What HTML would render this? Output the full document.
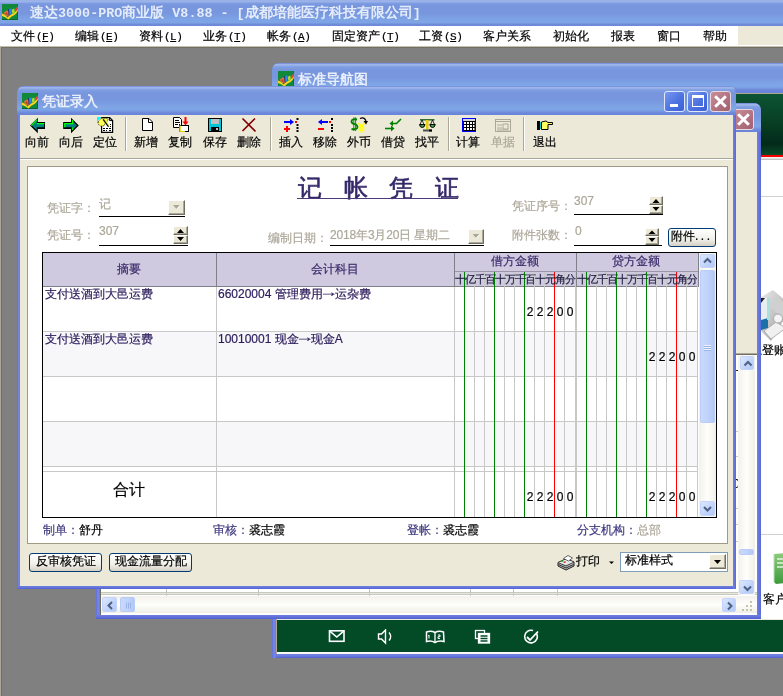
<!DOCTYPE html>
<html><head><meta charset="utf-8">
<style>
*{box-sizing:border-box}
html,body{margin:0;padding:0}
body{will-change:transform;-webkit-text-stroke-width:0.2px;width:783px;height:696px;overflow:hidden;position:relative;background:#808080;font-family:"Liberation Sans",sans-serif;font-size:12px;color:#000}
.a{position:absolute}
.tbar{background:linear-gradient(to bottom,#5a72d8 0px,#9fb6ea 1px,#9db4ea 2px,#7e9ee2 4px,#7896de 7px,#7896de 14px,#7fa6e7 22px,#7ea4e6 24px,#6c86da 27px,#6a84da 29px)}
.ttl{color:#e9eefb;font-weight:bold;font-size:13px;white-space:nowrap;-webkit-text-stroke-width:0}
.mi{position:absolute;top:29px;white-space:nowrap;font-size:12px;line-height:14px}
.wb{background:#ece9d8}
.tm{font-family:"Liberation Mono",monospace;font-size:13.4px}
.mm{font-family:"Liberation Mono",monospace;font-size:11px;letter-spacing:-0.5px;margin-left:1px}
#vc .a{font-size:12px;line-height:14px}
#vc div.a{white-space:nowrap}
.lbl{color:#aca899}
.val{color:#aca899}
.b3{background:#ece9d8;border-top:1px solid #fff;border-left:1px solid #fff;border-right:1px solid #716f64;border-bottom:1px solid #716f64;box-shadow:inset -1px -1px 0 #aca899}
.b3 svg{position:absolute;left:0;top:0}
.sub{width:11px;text-align:center;font-size:11px!important;line-height:14px!important;color:#202040;overflow:visible}
.dg{width:10px;text-align:center;font-family:"Liberation Sans",sans-serif}
.hl{left:43px;width:655px;height:1px;background:#c8c8c8}
.sep{top:117px;width:2px;height:34px;border-left:1px solid #aca899;border-right:1px solid #fff}
.tl{position:absolute;top:135px;font-size:12px;line-height:14px;white-space:nowrap}
.btn{border:1px solid #003c74;border-radius:3px;background:linear-gradient(to bottom,#fff,#f0f0ea 60%,#d6d0c5);text-align:center;font-size:12px;line-height:16px;white-space:nowrap}
.sbb{border:1px solid #c3d3fd;border-radius:2px;background:linear-gradient(135deg,#dce8fd,#c0d3fb 60%,#b4c8f6)}
.sbthumb{border:1px solid #b8ccf8;border-radius:2px;background:linear-gradient(to right,#cad9fc,#c0d3fb 50%,#b4c8f6)}
.xbtn{border:1px solid #e8d8e0;border-radius:3px;background:linear-gradient(135deg,#c89098,#b07080 60%,#a06070)}
.xbtn::before,.xbtn::after{content:"";position:absolute;left:8px;top:2px;width:3px;height:15px;background:#fff;transform:rotate(45deg)}
.xbtn::after{transform:rotate(-45deg)}
.bbtn{border:1px solid #e0e8fc;border-radius:3px;background:linear-gradient(135deg,#7898f0,#4a70e0 60%,#3a60d8)}
</style></head><body>
<!-- MDI sunken frame -->
<div class="a" style="left:0;top:46px;width:783px;height:650px;border-left:1px solid #aca899;border-top:1px solid #c5c1ae"></div>
<div class="a" style="left:1px;top:47px;width:782px;height:649px;border-left:1px solid #716f64;border-top:1px solid #716f64"></div>

<!-- main title bar -->
<div class="a" style="left:0;top:0;width:783px;height:26px;background:linear-gradient(to bottom,#97aee6 0px,#9db5ea 1px,#9ab2e9 2px,#7e9ee2 3px,#7896de 5px,#7896de 13px,#7ea4e6 20px,#7ea4e6 23px,#6f8ad8 24px,#6f8ad8 26px)"></div>
<svg width="0" height="0" style="position:absolute"><defs><g id="appico"><rect width="16" height="16" fill="#108a3a"/><rect y="15" width="16" height="1" fill="#0a6a2a"/><rect x="15" width="1" height="16" fill="#0c7030"/><path d="M0 9.5 Q3 10 5.5 13.5 Q8.5 10 12 9 Q14 7.5 16 4 L16 6.5 Q14.5 10 12.5 11 Q9 12 6.5 15.5 Q3 12.5 0 12Z" fill="#f8d428"/><path d="M1.5 9 L4.5 6.5 L6.8 7.5 L6.8 13 L4 11.5Z" fill="#e8703a"/><path d="M3 9.5 L5 8 L6 12 Z" fill="#c04020"/><path d="M6.2 5.2 L7.2 5 L7.4 11.5 L6.6 11.5Z" fill="#20208a"/><path d="M7.2 5 L9.4 4.6 L9.4 10 L7.6 11Z" fill="#2a8ae8"/><path d="M9.8 5.8 L12.3 4.5 L12.8 8.2 L10.2 9.8Z" fill="#b0d830"/><path d="M12.8 5.5 L16 2 L16 5.5 L13.8 7.5Z" fill="#e8482a"/></g></defs></svg>
<svg class="a" style="left:2px;top:4px" width="16" height="16" viewBox="0 0 16 16"><use href="#appico"/></svg>
<div class="a ttl" style="left:30px;top:3px;font-size:14px;line-height:18px;color:#e4ecfa">速达<span class="tm">3000-PRO</span>商业版<span class="tm"> V8.88 - [</span>成都培能医疗科技有限公司<span class="tm">]</span></div>

<!-- menu bar -->
<div class="a" style="left:0;top:26px;width:783px;height:20px;background:#fff"></div>
<div class="a" style="left:738px;top:26px;width:45px;height:19px;background:#ece9d8"></div>
<div class="mi" style="left:11px">文件<span class="mm">(<u>F</u>)</span></div>
<div class="mi" style="left:75px">编辑<span class="mm">(<u>E</u>)</span></div>
<div class="mi" style="left:139px">资料<span class="mm">(<u>L</u>)</span></div>
<div class="mi" style="left:203px">业务<span class="mm">(<u>T</u>)</span></div>
<div class="mi" style="left:267px">帐务<span class="mm">(<u>A</u>)</span></div>
<div class="mi" style="left:332px">固定资产<span class="mm">(<u>T</u>)</span></div>
<div class="mi" style="left:419px">工资<span class="mm">(<u>S</u>)</span></div>
<div class="mi" style="left:483px">客户关系</div>
<div class="mi" style="left:553px">初始化</div>
<div class="mi" style="left:611px">报表</div>
<div class="mi" style="left:657px">窗口</div>
<div class="mi" style="left:703px">帮助</div>

<!-- NAV WINDOW -->
<div id="nav" class="a" style="left:272px;top:63px;width:530px;height:595px;background:linear-gradient(to right,#5f6fd8 0,#7888e4 2px,#6a7ae0 4px);border-radius:7px 7px 0 0;overflow:hidden">
 <div class="a tbar" style="left:0;top:0;width:530px;height:30px"></div>
 <svg class="a" style="left:6px;top:8px" width="16" height="16" viewBox="0 0 16 16"><use href="#appico"/></svg>
 <div class="a ttl" style="left:26px;top:8px;font-size:14px;line-height:16px">标准导航图</div>
 <div class="a" style="left:5px;top:30px;width:525px;height:561px;background:#fff;border-top:1px solid #aca48e"></div>
 <div class="a" style="left:5px;top:31px;width:525px;height:61px;background:linear-gradient(to bottom,#0c5434 0,#073e22 30px,#03291a 50px,#0a4a2a 61px)"></div>
 <div class="a" style="left:5px;top:92px;width:525px;height:2px;background:#f00"></div>
 <div class="a" style="left:5px;top:94px;width:525px;height:3px;background:linear-gradient(to bottom,#fff 0,#e4e4e4 1px,#e0e0e0 2px,#c4c4c4 2px)"></div>
 <div class="a" style="left:5px;top:133px;width:525px;height:1px;background:#d0d0d0"></div>
 <div class="a" style="left:5px;top:471px;width:525px;height:1px;background:#d0d0d0"></div>
 <div class="a" style="left:5px;top:556px;width:525px;height:35px;background:#034b27;border-top:1px solid #e8e8e0;border-bottom:2px solid #f8f8f4"></div>
 <div class="a" style="left:4px;top:540px;width:1px;height:51px;background:#b0a890"></div>
 <div class="a" style="left:4px;top:591px;width:526px;height:4px;background:linear-gradient(to bottom,#7080e0,#6a7ade 2px,#5060d0)"></div>
 <svg class="a" style="left:56px;top:566px" width="260" height="16" viewBox="0 0 260 16" fill="none" stroke="#fff" stroke-width="1.6">
  <rect x="1.5" y="1.8" width="14.5" height="10.5"/><path d="M1.5 1.8 L8.75 8 L16 1.8"/>
  <path d="M50.5 5 L53.5 5 L57.5 1 L57.5 14 L53.5 10 L50.5 10Z" stroke-width="1.4"/><path d="M61 3.5 Q64.5 7.5 61 11.5" stroke-width="1.4"/>
  <path d="M98.5 3 Q103 1.5 107 3.5 Q111 1.5 115.5 3 L116 12.5 Q111 11 107 13.5 Q103 11 98.5 12.5Z" stroke-width="1.5"/><path d="M107 3.5 L107 13.5" stroke-width="1.3"/>
  <path d="M101 6 V9.5 M100.3 6.8 L101 6 M110 6 H112 V7.7 H110 V9.5 H112" stroke-width="1"/>
  <rect x="147.5" y="1.5" width="9" height="8" stroke-width="1.3"/><rect x="150.5" y="4.5" width="11" height="9.5" fill="#fff" stroke-width="1.3"/><path d="M152.5 7 H159.5 M152.5 9.5 H159.5 M152.5 12 H159.5" stroke="#034b27" stroke-width="1.3"/>
  <path d="M208.5 4.5 A6.3 6.3 0 1 1 205 1.6" stroke-width="1.6"/><path d="M199 8 L202 11 L210 2.5" stroke-width="1.8"/>
 </svg>
 <!-- right side icons -->
 <svg class="a" style="left:489px;top:226px" width="30" height="54" viewBox="761 289 30 54">
  <defs><linearGradient id="slv" x1="0" y1="0" x2="1" y2="1"><stop offset="0" stop-color="#e8e8e8"/><stop offset="0.6" stop-color="#b8b8b8"/><stop offset="1" stop-color="#909090"/></linearGradient></defs>
  <path d="M773 290 L792 306 L771 341 L761 331 L761 297Z" fill="url(#slv)"/>
  <path d="M776 296 L790 308 L782 318 L768 305Z" fill="#d0d0d0"/>
  <path d="M761 298 L768 298 L768 328 L761 328Z" fill="#e8eef0"/>
  <path d="M761 320 L768 318 L768 328 L761 330Z" fill="#1a70a8"/>
  <path d="M761 298 L765 298 L761 303Z" fill="#202020"/>
  <rect x="767" y="298" width="3" height="22" fill="#a8e0e0"/>
  <path d="M764 331 L776 322 L786 328 L771 339Z" fill="#f0f0f0" stroke="#a0a0a0" stroke-width="0.8"/>
  <circle cx="778" cy="318.5" r="4.5" fill="#f4f4f4" stroke="#a8a8a8"/>
 </svg>
 <div class="a" style="left:478px;top:279px;font-size:12px;white-space:nowrap">总登账</div>
 <svg class="a" style="left:501px;top:489px" width="12" height="32" viewBox="0 0 12 32"><defs><linearGradient id="grn" x1="0" y1="0" x2="0" y2="1"><stop offset="0" stop-color="#8ccc7c"/><stop offset="1" stop-color="#3c9a3c"/></linearGradient></defs><path d="M1 2 L12 1 L12 31 L3 32 L1 30Z" fill="url(#grn)"/><path d="M4 7 H12 M4 11 H12 M4 15 H12" stroke="#e8f4e4" stroke-width="1.5"/><path d="M1 2 V30" stroke="#b8e0b0" stroke-width="1"/></svg>
 <div class="a" style="left:491px;top:528px;font-size:12px;white-space:nowrap">客户</div>
</div>

<!-- SECOND WINDOW -->
<div id="w2" class="a" style="left:96px;top:103px;width:665px;height:516px;background:linear-gradient(to right,#5f6fd8 0,#7888e4 2px,#6a7ae0 4px,#6a7ae0 661px,#7080e2 662px,#5a6ad6 665px);border-radius:7px 7px 0 0;overflow:hidden">
 <div class="a tbar" style="left:0;top:0;width:665px;height:29px"></div>
 <div class="a" style="left:4px;top:29px;width:657px;height:483px;background:#ece9d8"></div>
 <!-- grid area (sunken) -->
 <div class="a" style="left:4px;top:250px;width:657px;height:262px;background:#fff;border-top:1px solid #aca899"></div>
 <div class="a" style="left:4px;top:251px;width:657px;height:1px;background:#716f64"></div>
 <div class="a" style="left:4px;top:252px;width:1px;height:260px;background:#716f64"></div>
 <div class="a" style="left:5px;top:489px;width:656px;height:3px;background:#e3e8dc;border-top:1px solid #c8c8c0;border-bottom:1px solid #c8c8c0"></div>
 <div class="a" style="left:70px;top:486px;width:1px;height:7px;background:#c8c8c0"></div>
 <div class="a" style="left:162px;top:486px;width:1px;height:7px;background:#c8c8c0"></div>
 <div class="a" style="left:273px;top:486px;width:1px;height:7px;background:#c8c8c0"></div>
 <div class="a" style="left:374px;top:486px;width:1px;height:7px;background:#c8c8c0"></div>
 <div class="a" style="left:417px;top:486px;width:1px;height:7px;background:#c8c8c0"></div>
 <div class="a" style="left:461px;top:486px;width:1px;height:7px;background:#c8c8c0"></div>
 <!-- row ticks visible at right -->
 <div class="a" style="left:640px;top:267px;width:3px;height:1px;background:#222"></div>
 <div class="a" style="left:640px;top:328px;width:3px;height:1px;background:#c8c8c0"></div>
 <div class="a" style="left:640px;top:353px;width:3px;height:1px;background:#c8c8c0"></div>
 <div class="a" style="left:640px;top:405px;width:3px;height:1px;background:#c8c8c0"></div>
 <div class="a" style="left:640px;top:421px;width:3px;height:1px;background:#c8c8c0"></div>
 <div class="a" style="left:640px;top:438px;width:3px;height:1px;background:#c8c8c0"></div>
 <div class="a" style="left:637px;top:374px;font-size:12px;line-height:14px;-webkit-text-stroke-width:0">0</div>
 <!-- vertical scrollbar -->
 <div class="a" style="left:642px;top:252px;width:17px;height:240px;background:linear-gradient(to right,#f3f1ec,#fefefb 50%,#f0efe6)"></div>
 <div class="a sbb" style="left:644px;top:253px;width:14px;height:14px"><svg width="14" height="14" viewBox="0 0 14 14"><path d="M3.5 8.5 L7 5 L10.5 8.5" fill="none" stroke="#4d6185" stroke-width="2"/></svg></div>
 <div class="a sbthumb" style="left:643px;top:446px;width:15px;height:6px"></div>
 <div class="a sbb" style="left:643px;top:477px;width:15px;height:14px"><svg width="15" height="14" viewBox="0 0 15 14"><path d="M4 5.5 L7.5 9 L11 5.5" fill="none" stroke="#4d6185" stroke-width="2"/></svg></div>
 <!-- horizontal scrollbar -->
 <div class="a" style="left:5px;top:493px;width:656px;height:17px;background:linear-gradient(to bottom,#f3f1ec,#fefefb 50%,#f0efe6)"></div>
 <div class="a sbb" style="left:6px;top:494px;width:15px;height:15px"><svg width="15" height="15" viewBox="0 0 15 15"><path d="M9 4 L5.5 7.5 L9 11" fill="none" stroke="#4d6185" stroke-width="2"/></svg></div>
 <div class="a sbthumb" style="left:24px;top:494px;width:15px;height:15px"><svg width="15" height="15" viewBox="0 0 15 15"><path d="M5.5 4.5 V10.5 M7.5 4.5 V10.5 M9.5 4.5 V10.5" stroke="#9bb4e8" stroke-width="1"/></svg></div>
 <div class="a sbb" style="left:626px;top:495px;width:14px;height:14px"><svg width="14" height="14" viewBox="0 0 14 14"><path d="M5 3.5 L8.5 7 L5 10.5" fill="none" stroke="#4d6185" stroke-width="2"/></svg></div>
 <svg class="a" style="left:644px;top:496px" width="14" height="14" viewBox="0 0 14 14" fill="#c6c2b0"><rect x="10" y="2" width="2" height="2"/><rect x="6" y="6" width="2" height="2"/><rect x="10" y="6" width="2" height="2"/><rect x="2" y="10" width="2" height="2"/><rect x="6" y="10" width="2" height="2"/><rect x="10" y="10" width="2" height="2"/></svg>
 <div class="a" style="left:661px;top:29px;width:4px;height:487px;background:linear-gradient(to right,#7080e2,#5a6ad6)"></div>
 <div class="a" style="left:0;top:512px;width:665px;height:4px;background:linear-gradient(to bottom,#7080e0,#6070d8 2px,#5060d0)"></div>
 <!-- close btn -->
 <div class="a xbtn" style="left:637px;top:6px;width:21px;height:21px"></div>
</div>

<!-- VOUCHER WINDOW -->
<div id="vw" class="a" style="left:17px;top:86px;width:719px;height:503px;background:linear-gradient(to right,#5f6fd8 0,#7888e4 2px,#6a7ae0 3px,#6a7ae0 716px,#7080e2 717px,#5a6ad6 719px);border-radius:7px 7px 0 0;overflow:hidden">
 <div class="a tbar" style="left:0;top:0;width:719px;height:29px"></div>
 <svg class="a" style="left:5px;top:7px" width="16" height="16" viewBox="0 0 16 16"><use href="#appico"/></svg>
 <div class="a ttl" style="left:25px;top:7px;font-size:14px;line-height:16px">凭证录入</div>
 <div class="a bbtn" style="left:647px;top:5px;width:21px;height:21px"><div class="a" style="left:5px;top:12px;width:8px;height:3px;background:#fff"></div></div>
 <div class="a bbtn" style="left:670px;top:5px;width:21px;height:21px"><div class="a" style="left:4px;top:3px;width:12px;height:12px;border:1px solid #fff;border-top:3px solid #fff"></div></div>
 <div class="a xbtn" style="left:693px;top:5px;width:21px;height:21px"></div>
 <div class="a" style="left:3px;top:29px;width:713px;height:471px;background:#ece9d8"></div>
 <div class="a" style="left:0;top:500px;width:719px;height:3px;background:linear-gradient(to bottom,#7080e0,#6070d8 2px,#5060d0)"></div>
 <div class="a" style="left:716px;top:29px;width:3px;height:474px;background:linear-gradient(to right,#7080e2,#5a6ad6)"></div>
</div>

<!-- voucher contents (absolute page coords) -->
<div id="vc">
 <!-- toolbar separators -->
 <div class="a sep" style="left:125px"></div>
 <div class="a sep" style="left:270px"></div>
 <div class="a sep" style="left:448px"></div>
 <div class="a sep" style="left:523px"></div>
 <div class="a" style="left:20px;top:158px;width:713px;height:1px;background:#aca899"></div>
 <div class="a" style="left:20px;top:159px;width:713px;height:1px;background:#fff"></div>
 <!-- toolbar labels -->
 <div class="tl" style="left:25px">向前</div>
 <div class="tl" style="left:59px">向后</div>
 <div class="tl" style="left:93px">定位</div>
 <div class="tl" style="left:134px">新增</div>
 <div class="tl" style="left:168px">复制</div>
 <div class="tl" style="left:203px">保存</div>
 <div class="tl" style="left:237px">删除</div>
 <div class="tl" style="left:279px">插入</div>
 <div class="tl" style="left:313px">移除</div>
 <div class="tl" style="left:347px">外币</div>
 <div class="tl" style="left:381px">借贷</div>
 <div class="tl" style="left:415px">找平</div>
 <div class="tl" style="left:456px">计算</div>
 <div class="tl" style="left:491px;color:#aca899">单据</div>
 <div class="tl" style="left:533px">退出</div>
 <!-- toolbar icons -->
 <svg class="a" style="left:0;top:114px" width="560" height="22" viewBox="0 114 560 22">
  <!-- left arrow -->
  <path d="M30 125.5 L37.8 117.7 L37.8 122 L45 122 L45 129 L37.8 129 L37.8 133.3Z" fill="#000"/>
  <path d="M31.8 125.5 L36.8 120.5 L36.8 123 L44 123 L44 127.2 L36.8 127.2 L36.8 130.3Z" fill="#008080"/>
  <path d="M31.2 125.6 L37 119.8 M37 123.6 H44.4" stroke="#00ff00" stroke-width="1.3"/>
  <!-- right arrow -->
  <path d="M78.8 125.5 L71 117.7 L71 122 L63.2 122 L63.2 129 L71 129 L71 133.3Z" fill="#000"/>
  <path d="M77 125.5 L72 120.5 L72 123 L64.2 123 L64.2 127.2 L72 127.2 L72 130.3Z" fill="#008080"/>
  <path d="M64.8 127.3 V123.6 H72.5 V120 M72.5 127.5 V130" fill="none" stroke="#00ff00" stroke-width="1.3"/>
  <!-- locate -->
  <path d="M101.6 117.6 H109.6 L112.6 120.6 V132.4 H101.6Z" fill="#fff" stroke="#000" stroke-width="1.2"/>
  <path d="M109.6 117.6 V120.6 H112.6" fill="none" stroke="#000" stroke-width="1"/>
  <path d="M97 117 H101.5 L97 121.5Z" fill="#00ffff"/>
  <path d="M98 121.8 L101.2 118.3 L107 118.3 L108.5 120 L105.5 122.5 L104 125.8 L100.6 126.2 L98.2 124Z" fill="#ffff50" stroke="#000" stroke-width="0.9" stroke-dasharray="1 1"/>
  <path d="M103.3 119.3 L108.6 126.6" stroke="#000" stroke-width="1.6"/><path d="M104 119 L109.2 126" stroke="#ffff00" stroke-width="0.8"/>
  <path d="M103 128.5 h2 M106 128.5 h2 M109 128.5 h2 M103 130.5 h2 M106 130.5 h1 M109 130.5 h2 M110 124.5 h1 M110 126.5 h1" stroke="#000" stroke-width="1"/>
  <!-- new -->
  <path d="M142.5 118.5 L149 118.5 L152.5 122 L152.5 130.5 L142.5 130.5Z" fill="#fff" stroke="#000"/>
  <path d="M148.5 118.5 L148.5 122.5 L152.5 122.5" fill="none" stroke="#000"/>
  <!-- copy -->
  <path d="M173.5 117.5 L179.5 117.5 L181.5 119.5 L181.5 127.5 L173.5 127.5Z" fill="#fff" stroke="#000"/>
  <rect x="175" y="120" width="4" height="1" fill="#000"/><rect x="175" y="122" width="5" height="1" fill="#000"/><rect x="175" y="124" width="3" height="1" fill="#000"/><rect x="179" y="124" width="1" height="1" fill="#000"/>
  <rect x="179.5" y="125.5" width="9" height="6" fill="#fff" stroke="#000"/>
  <path d="M180 125.5 V132" stroke="#e8d000" stroke-width="1.5"/><path d="M180 131.5 H185" stroke="#e8d000" stroke-width="1"/>
  <path d="M185.5 117 L185.5 123" stroke="#f00" stroke-width="2"/><path d="M182.5 121.5 L185.5 125.5 L188.5 121.5Z" fill="#f00"/>
  <!-- save -->
  <rect x="208.5" y="118.5" width="13" height="13" fill="#00c8d8" stroke="#000"/>
  <rect x="211" y="119" width="8" height="5" fill="#c0c0c0"/>
  <rect x="211" y="127" width="8" height="4" fill="#000"/>
  <rect x="216" y="128" width="2" height="2" fill="#c0c0c0"/>
  <!-- delete -->
  <path d="M242.5 118.5 L255.5 131.5 M255 118.5 L242.5 131" stroke="#800000" stroke-width="1.7"/>
  <!-- insert -->
  <path d="M284 122 L291 122" stroke="#0000ff" stroke-width="2"/><path d="M290 119 L294 122 L290 125Z" fill="#0000ff"/>
  <rect x="295" y="121" width="2" height="2" fill="#f00"/>
  <path d="M297.5 118 V120 M297.5 124 V126 M297.5 127 V129 M297.5 130 V132" stroke="#000" stroke-width="2"/>
  <path d="M284 129 H290 M287 126 V132" stroke="#f00" stroke-width="2"/>
  <!-- remove -->
  <path d="M321 122 L328 122" stroke="#0000ff" stroke-width="2"/><path d="M322 119 L318 122 L322 125Z" fill="#0000ff"/>
  <rect x="329" y="121" width="2" height="2" fill="#f00"/>
  <path d="M332 118 V120 M332 124 V126 M332 127 V129 M332 130 V132" stroke="#000" stroke-width="2"/>
  <path d="M318 129 H324" stroke="#f00" stroke-width="2"/>
  <!-- foreign currency -->
  <path d="M357 119.5 Q351.5 118.5 351.5 121.5 Q351.5 123.5 354.5 124 Q357.5 124.8 357.5 127 Q357.5 130 351.5 129" fill="none" stroke="#008000" stroke-width="1.8"/>
  <path d="M353.8 117.3 V131 M355.6 117.3 V131" stroke="#008000" stroke-width="0.9"/>
  <path d="M358.5 123 L361.5 127 L364.5 123 M361.5 127 V133" fill="none" stroke="#ffff00" stroke-width="1.8"/>
  <path d="M358.5 127.8 H364.5 M358.5 130.2 H364.5" stroke="#ffff00" stroke-width="1.3"/>
  <path d="M360 118.5 Q364.5 116.5 366 121" fill="none" stroke="#000" stroke-width="1.3"/><path d="M363.5 121 L368 121 L366 124.5Z" fill="#000"/>
  <!-- debit/credit -->
  <path d="M401 119 L396.5 123.5 L391 123.5" fill="none" stroke="#008000" stroke-width="1.6"/><path d="M393 120.5 L389.5 123.5 L393 126.5Z" fill="#008000"/>
  <path d="M385 128.5 L392 128.5" stroke="#008000" stroke-width="1.6"/><path d="M391 125.5 L394.5 128.5 L391 131.5Z" fill="#008000"/>
  <!-- balance -->
  <path d="M420 119.8 H434.5" stroke="#206020" stroke-width="1.4"/>
  <rect x="426" y="120" width="2.5" height="9.5" fill="#e8d000"/>
  <path d="M422 120 L420 124.5 M422 120 L424 124.5 M432.5 120 L430.5 124.5 M432.5 120 L434.5 124.5" stroke="#000" stroke-width="0.8"/>
  <path d="M419.5 124.5 H425 Q424.5 127.5 422.2 127.5 Q420 127.5 419.5 124.5Z M429.8 124.5 H435.3 Q434.8 127.5 432.5 127.5 Q430.3 127.5 429.8 124.5Z" fill="#40a040" stroke="#000" stroke-width="1"/>
  <path d="M423 130.5 H432" stroke="#505050" stroke-width="2"/><rect x="429" y="129.5" width="3" height="2" fill="#000"/>
  <!-- calc -->
  <rect x="462.5" y="118.5" width="13" height="13" fill="#000" stroke="#0000ff"/>
  <rect x="463" y="119" width="12" height="2" fill="#d8d8d8"/>
  <g fill="#fff"><rect x="464" y="122" width="2" height="2"/><rect x="467" y="122" width="2" height="2"/><rect x="470" y="122" width="2" height="2"/><rect x="473" y="122" width="1.5" height="2"/>
  <rect x="464" y="125" width="2" height="2"/><rect x="467" y="125" width="2" height="2"/><rect x="470" y="125" width="2" height="2"/><rect x="473" y="125" width="1.5" height="2"/>
  <rect x="464" y="128" width="2" height="2"/><rect x="467" y="128" width="2" height="2"/><rect x="470" y="128" width="2" height="2"/><rect x="473" y="128" width="1.5" height="2"/></g>
  <!-- bill disabled -->
  <rect x="495.5" y="119.5" width="15" height="12" fill="none" stroke="#aca899"/>
  <path d="M496 121.5 H510 M497 125h5 M497 128h5 M503 124 h5 v5 h-5z M497 130h12" stroke="#aca899" stroke-width="1" fill="none"/>
  <!-- exit hand -->
  <rect x="537" y="121" width="3" height="9" fill="#000"/>
  <rect x="540" y="122" width="1.5" height="7" fill="#00d0d0"/>
  <path d="M541.5 122 L546 121 L548 122.5 L552.5 122.5 L552.5 124.5 L548 124.5 L548 129.5 L541.5 129.5Z" fill="#ffff60" stroke="#000" stroke-width="1"/>
 </svg>

 <!-- panel -->
 <div class="a" style="left:27px;top:166px;width:701px;height:378px;background:#fff;border:1px solid #a39a86"></div>
 <div class="a" style="left:298px;top:173px;font-size:24px;line-height:30px;color:#35286a;font-weight:normal;-webkit-text-stroke-width:0.6px;letter-spacing:21.7px;white-space:nowrap">记帐凭证</div>
 <div class="a" style="left:297px;top:198px;width:161px;height:1px;background:#4a3a7a"></div>
 <div class="a lbl" style="left:47px;top:201px">凭证字：</div>
 <div class="a val" style="left:99px;top:197px">记</div>
 <div class="a" style="left:99px;top:216px;width:86px;height:1px;background:#000"></div>
 <div class="a b3" style="left:168px;top:200px;width:17px;height:15px"><svg width="15" height="13" viewBox="0 0 15 13"><path d="M4 4 H11 L7.5 8Z" fill="#aca899"/><path d="M11 4.5 L7.5 8.5" stroke="#fff" stroke-width="1"/></svg></div>
 <div class="a lbl" style="left:47px;top:228px">凭证号：</div>
 <div class="a val" style="left:99px;top:224px">307</div>
 <div class="a" style="left:99px;top:245px;width:89px;height:1px;background:#000"></div>
 <div class="a b3" style="left:173px;top:226px;width:15px;height:9px"><svg width="13" height="7" viewBox="0 0 13 7"><path d="M3 6 H10 L6.5 2Z" fill="#000"/></svg></div>
 <div class="a b3" style="left:173px;top:235px;width:15px;height:9px"><svg width="13" height="7" viewBox="0 0 13 7"><path d="M3 1 H10 L6.5 5Z" fill="#000"/></svg></div>

 <div class="a lbl" style="left:268px;top:231px">编制日期：</div>
 <div class="a val" style="left:330px;top:228px;letter-spacing:-0.15px">2018年3月20日 星期二</div>
 <div class="a" style="left:330px;top:245px;width:154px;height:1px;background:#000"></div>
 <div class="a b3" style="left:468px;top:229px;width:16px;height:15px"><svg width="14" height="13" viewBox="0 0 14 13"><path d="M3.5 4 H10.5 L7 8Z" fill="#aca899"/><path d="M10.5 4.5 L7 8.5" stroke="#fff" stroke-width="1"/></svg></div>

 <div class="a lbl" style="left:512px;top:199px">凭证序号：</div>
 <div class="a val" style="left:574px;top:194px">307</div>
 <div class="a" style="left:574px;top:214px;width:89px;height:1px;background:#000"></div>
 <div class="a b3" style="left:649px;top:196px;width:14px;height:9px"><svg width="12" height="7" viewBox="0 0 12 7"><path d="M2.5 6 H9.5 L6 2Z" fill="#000"/></svg></div>
 <div class="a b3" style="left:649px;top:205px;width:14px;height:9px"><svg width="12" height="7" viewBox="0 0 12 7"><path d="M2.5 1 H9.5 L6 5Z" fill="#000"/></svg></div>

 <div class="a lbl" style="left:512px;top:228px">附件张数：</div>
 <div class="a val" style="left:575px;top:224px">0</div>
 <div class="a" style="left:574px;top:245px;width:88px;height:1px;background:#000"></div>
 <div class="a b3" style="left:645px;top:228px;width:14px;height:8px"><svg width="12" height="6" viewBox="0 0 12 6"><path d="M2.5 5 H9.5 L6 1.5Z" fill="#000"/></svg></div>
 <div class="a b3" style="left:645px;top:236px;width:14px;height:9px"><svg width="12" height="7" viewBox="0 0 12 7"><path d="M2.5 1 H9.5 L6 5Z" fill="#000"/></svg></div>
 <div class="a btn" style="left:668px;top:228px;width:48px;height:19px;text-align:left;padding-left:2px;letter-spacing:0">附件<span style="letter-spacing:2.5px">...</span></div>

 <!-- grid -->
 <div class="a" style="left:42px;top:252px;width:675px;height:266px;border:1px solid #000;background:#fff"></div>
 <div class="a" style="left:43px;top:253px;width:655px;height:34px;background:#d0cae0;border-bottom:1px solid #808088"></div>
 <div class="a" style="left:43px;top:331px;width:655px;height:45px;background:#f7f7fa"></div>
 <div class="a" style="left:43px;top:421px;width:655px;height:45px;background:#f7f7fa"></div>
 <div class="a hl" style="top:331px"></div>
 <div class="a hl" style="top:376px"></div>
 <div class="a hl" style="top:421px"></div>
 <div class="a hl" style="top:466px"></div>
 <div class="a hl" style="top:471px"></div>
 <div class="a" style="left:216px;top:253px;width:1px;height:264px;background:#c8c8c8"></div>
 <div class="a" style="left:216px;top:253px;width:1px;height:34px;background:#808088"></div>
 <div class="a" style="left:454px;top:253px;width:1px;height:264px;background:#c8c8c8"></div>
 <div class="a" style="left:454px;top:253px;width:1px;height:34px;background:#808088"></div>
 <div class="a" style="left:576px;top:253px;width:1px;height:264px;background:#c8c8c8"></div>
 <div class="a" style="left:576px;top:253px;width:1px;height:34px;background:#808088"></div>
 <div class="a" style="left:455px;top:271px;width:243px;height:1px;background:#9a96a8"></div>
 <div class="a" style="left:117px;top:262px;color:#3a2a6a" >摘要</div>
 <div class="a" style="left:311px;top:262px;color:#3a2a6a">会计科目</div>
 <div class="a" style="left:491px;top:254px;color:#3a2a6a">借方金额</div>
 <div class="a" style="left:612px;top:254px;color:#3a2a6a">贷方金额</div>
 <div class="a" style="left:464px;top:272px;width:1px;height:245px;background:#008000"></div>
 <div class="a" style="left:474px;top:272px;width:1px;height:245px;background:#c8c8c8"></div>
 <div class="a" style="left:484px;top:272px;width:1px;height:245px;background:#c8c8c8"></div>
 <div class="a" style="left:494px;top:272px;width:1px;height:245px;background:#008000"></div>
 <div class="a" style="left:504px;top:272px;width:1px;height:245px;background:#c8c8c8"></div>
 <div class="a" style="left:514px;top:272px;width:1px;height:245px;background:#c8c8c8"></div>
 <div class="a" style="left:524px;top:272px;width:1px;height:245px;background:#008000"></div>
 <div class="a" style="left:534px;top:272px;width:1px;height:245px;background:#c8c8c8"></div>
 <div class="a" style="left:544px;top:272px;width:1px;height:245px;background:#c8c8c8"></div>
 <div class="a" style="left:554px;top:272px;width:1px;height:245px;background:#ff0000"></div>
 <div class="a" style="left:564px;top:272px;width:1px;height:245px;background:#c8c8c8"></div>
 <div class="a" style="left:575px;top:272px;width:1px;height:245px;background:#c8c8c8"></div>
 <div class="a" style="left:586px;top:272px;width:1px;height:245px;background:#008000"></div>
 <div class="a" style="left:596px;top:272px;width:1px;height:245px;background:#c8c8c8"></div>
 <div class="a" style="left:606px;top:272px;width:1px;height:245px;background:#c8c8c8"></div>
 <div class="a" style="left:616px;top:272px;width:1px;height:245px;background:#008000"></div>
 <div class="a" style="left:626px;top:272px;width:1px;height:245px;background:#c8c8c8"></div>
 <div class="a" style="left:636px;top:272px;width:1px;height:245px;background:#c8c8c8"></div>
 <div class="a" style="left:646px;top:272px;width:1px;height:245px;background:#008000"></div>
 <div class="a" style="left:656px;top:272px;width:1px;height:245px;background:#c8c8c8"></div>
 <div class="a" style="left:666px;top:272px;width:1px;height:245px;background:#c8c8c8"></div>
 <div class="a" style="left:676px;top:272px;width:1px;height:245px;background:#ff0000"></div>
 <div class="a" style="left:686px;top:272px;width:1px;height:245px;background:#c8c8c8"></div>
 
 <div class="a sub" style="left:455px;top:272px">十</div>
 <div class="a sub" style="left:465px;top:272px">亿</div>
 <div class="a sub" style="left:475px;top:272px">千</div>
 <div class="a sub" style="left:485px;top:272px">百</div>
 <div class="a sub" style="left:495px;top:272px">十</div>
 <div class="a sub" style="left:505px;top:272px">万</div>
 <div class="a sub" style="left:515px;top:272px">千</div>
 <div class="a sub" style="left:525px;top:272px">百</div>
 <div class="a sub" style="left:535px;top:272px">十</div>
 <div class="a sub" style="left:545px;top:272px">元</div>
 <div class="a sub" style="left:555px;top:272px">角</div>
 <div class="a sub" style="left:565px;top:272px">分</div>
 <div class="a sub" style="left:577px;top:272px">十</div>
 <div class="a sub" style="left:587px;top:272px">亿</div>
 <div class="a sub" style="left:597px;top:272px">千</div>
 <div class="a sub" style="left:607px;top:272px">百</div>
 <div class="a sub" style="left:617px;top:272px">十</div>
 <div class="a sub" style="left:627px;top:272px">万</div>
 <div class="a sub" style="left:637px;top:272px">千</div>
 <div class="a sub" style="left:647px;top:272px">百</div>
 <div class="a sub" style="left:657px;top:272px">十</div>
 <div class="a sub" style="left:667px;top:272px">元</div>
 <div class="a sub" style="left:677px;top:272px">角</div>
 <div class="a sub" style="left:687px;top:272px">分</div>
 <div class="a dg" style="left:525px;top:305px">2</div>
 <div class="a dg" style="left:535px;top:305px">2</div>
 <div class="a dg" style="left:545px;top:305px">2</div>
 <div class="a dg" style="left:555px;top:305px">0</div>
 <div class="a dg" style="left:565px;top:305px">0</div>
 <div class="a dg" style="left:647px;top:350px">2</div>
 <div class="a dg" style="left:657px;top:350px">2</div>
 <div class="a dg" style="left:667px;top:350px">2</div>
 <div class="a dg" style="left:677px;top:350px">0</div>
 <div class="a dg" style="left:687px;top:350px">0</div>
 <div class="a dg" style="left:525px;top:490px">2</div>
 <div class="a dg" style="left:535px;top:490px">2</div>
 <div class="a dg" style="left:545px;top:490px">2</div>
 <div class="a dg" style="left:555px;top:490px">0</div>
 <div class="a dg" style="left:565px;top:490px">0</div>
 <div class="a dg" style="left:647px;top:490px">2</div>
 <div class="a dg" style="left:657px;top:490px">2</div>
 <div class="a dg" style="left:667px;top:490px">2</div>
 <div class="a dg" style="left:677px;top:490px">0</div>
 <div class="a dg" style="left:687px;top:490px">0</div>

 <div class="a" style="left:45px;top:287px;color:#2c1c5c">支付送酒到大邑运费</div>
 <div class="a" style="left:218px;top:287px;color:#2c1c5c">66020004 管理费用<span style="display:inline-block;width:12px;font-family:'Liberation Mono';font-size:12px;letter-spacing:0;transform:scaleX(1.6);transform-origin:left center;position:relative;top:-2px">→</span>运杂费</div>
 <div class="a" style="left:45px;top:332px;color:#2c1c5c">支付送酒到大邑运费</div>
 <div class="a" style="left:218px;top:332px;color:#2c1c5c">10010001 现金<span style="display:inline-block;width:12px;font-family:'Liberation Mono';font-size:12px;letter-spacing:0;transform:scaleX(1.6);transform-origin:left center;position:relative;top:-2px">→</span>现金A</div>
 <div class="a" style="left:113px;top:480px;font-size:16px;line-height:20px">合计</div>

 <div class="a" style="left:697px;top:272px;width:1px;height:245px;background:#c8c8c8"></div>
 <div class="a" style="left:698px;top:253px;width:1px;height:34px;background:#808088"></div>
 <!-- grid scrollbar -->
 <div class="a" style="left:699px;top:253px;width:17px;height:264px;background:linear-gradient(to right,#f3f1ec,#fefefb 50%,#f0efe6)"></div>
 <div class="a sbb" style="left:700px;top:254px;width:15px;height:14px"><svg width="13" height="12" viewBox="0 0 13 12"><path d="M3 7.5 L6.5 4 L10 7.5" fill="none" stroke="#4d6185" stroke-width="2"/></svg></div>
 <div class="a sbthumb" style="left:700px;top:270px;width:15px;height:153px"><svg width="13" height="151" viewBox="0 0 13 151"><path d="M3 74.5h7 M3 76.5h7 M3 78.5h7" stroke="#eef3fe" stroke-width="1"/><path d="M3 75.5h7 M3 77.5h7 M3 79.5h7" stroke="#9bb4e8" stroke-width="1"/></svg></div>
 <div class="a sbb" style="left:700px;top:501px;width:15px;height:15px"><svg width="13" height="13" viewBox="0 0 13 13"><path d="M3 5 L6.5 8.5 L10 5" fill="none" stroke="#4d6185" stroke-width="2"/></svg></div>

 <div class="a" style="left:43px;top:523px;white-space:nowrap"><span style="color:#403a80">制单：</span>舒丹</div>
 <div class="a" style="left:213px;top:523px;white-space:nowrap"><span style="color:#403a80">审核：</span>裘志霞</div>
 <div class="a" style="left:407px;top:523px;white-space:nowrap"><span style="color:#403a80">登帐：</span>裘志霞</div>
 <div class="a" style="left:577px;top:523px;white-space:nowrap"><span style="color:#403a80">分支机构：</span><span style="color:#aca899">总部</span></div>

 <!-- print + combo -->
 <svg class="a" style="left:556px;top:553px" width="20" height="18" viewBox="556 553 20 18">
  <path d="M558 562.5 L566.5 558.5 L574 562 L574 566 L566 570 L558 566Z" fill="#b8b8b8" stroke="#202020" stroke-width="1"/>
  <path d="M558 562.5 L566 566 L574 562" fill="none" stroke="#404040" stroke-width="1"/>
  <path d="M558.5 564.5 L566 568 L573.5 564.5" fill="none" stroke="#202020" stroke-width="0.9"/>
  <path d="M559 562.5 L566.5 559.3 L573 562 L566 565Z" fill="#e8e8e8"/>
  <path d="M563.5 558.5 L568 555.5 L572.5 558 L568.5 561Z" fill="#fff" stroke="#404040" stroke-width="0.8"/>
  <rect x="561" y="560.5" width="2" height="1.2" fill="#00c000"/><rect x="563.5" y="561.5" width="2.2" height="1.2" fill="#e00000"/>
 </svg>
 <div class="a" style="left:576px;top:554px">打印</div>
 <svg class="a" style="left:608px;top:560px" width="7" height="5" viewBox="0 0 7 5"><path d="M1 1.5 H6 L3.5 4Z" fill="#000"/></svg>
 <div class="a" style="left:620px;top:552px;width:108px;height:20px;border:1px solid #7f9db9;background:#fff"></div>
 <div class="a" style="left:625px;top:553px">标准样式</div>
 <div class="a b3" style="left:709px;top:554px;width:17px;height:15px"><svg width="15" height="13" viewBox="0 0 15 13"><path d="M4 5 H11 L7.5 9Z" fill="#000"/></svg></div>

 <!-- bottom buttons -->
 <div class="a btn" style="left:29px;top:553px;width:73px;height:19px">反审核凭证</div>
 <div class="a btn" style="left:109px;top:553px;width:83px;height:19px">现金流量分配</div>
</div>

</body></html>
